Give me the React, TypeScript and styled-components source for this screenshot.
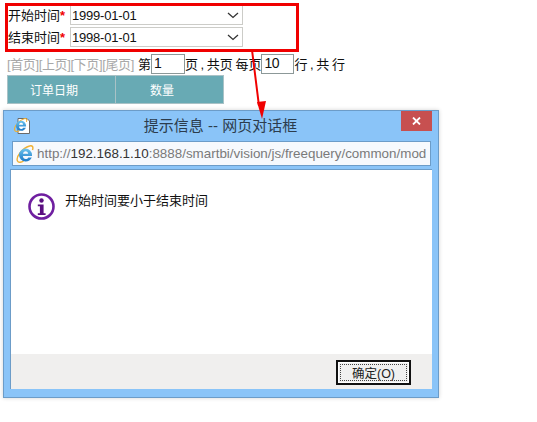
import React from "react";
import styled, { createGlobalStyle } from "styled-components";

const Global = createGlobalStyle`
  html, body { margin: 0; padding: 0; background: #fff; }
  body { font-family: "Liberation Sans", "Noto Sans CJK SC", sans-serif; font-size: 13px; color: #111; }
`;

const Page = styled.div`
  position: relative;
  width: 537px;
  height: 422px;
  overflow: hidden;
  padding: 3px 0 0 3px;
  box-sizing: border-box;
`;

const Form = styled.div`
  position: relative;
  box-sizing: border-box;
  width: 294px;
  height: 49px;
  margin-left: 2px;
  padding: 2px 0 0 3px;
  display: flex;
  flex-direction: column;
  gap: 2px;
  &::after {
    content: "";
    position: absolute;
    inset: 0;
    border: 3px solid #f00000;
  }
`;

const FormRow = styled.div`
  display: flex;
  align-items: center;
  height: 20px;
`;

const Label = styled.span`
  font-size: 13px;
  width: 62px;
  white-space: nowrap;
  position: relative;
  top: -1px;
`;

const Star = styled.span`
  color: #f00000;
  font-weight: bold;
`;

const Select = styled.div`
  box-sizing: border-box;
  width: 173px;
  height: 20px;
  border: 1px solid #ccccc8;
  display: flex;
  align-items: center;
  justify-content: space-between;
  padding: 0 3px 0 1px;
  font-size: 13px;
  letter-spacing: -0.2px;
  background: #fff;
`;

const Pager = styled.div`
  display: flex;
  align-items: center;
  height: 21px;
  margin: 1px 0 0 4px;
  white-space: pre;
  font-size: 13px;
  word-spacing: -1px;
`;

const PagerLinks = styled.span`
  color: #a8a8a8;
  margin-right: 4px;
  letter-spacing: -0.37px;
`;

const PageInput = styled.div<{ $w: number }>`
  box-sizing: border-box;
  width: ${(p) => p.$w}px;
  height: 20px;
  border: 1px solid #8c9898;
  padding-left: 2px;
  line-height: 16px;
  font-size: 14px;
  letter-spacing: -0.5px;
`;

const Table = styled.div`
  box-sizing: border-box;
  display: flex;
  width: 217px;
  height: 29px;
  margin: 1px 0 0 4px;
  background: #68aab4;
  border: 1px solid #a9c2c6;
  color: #fff;
  font-size: 12px;
`;

const HeaderCell = styled.div<{ $w: number }>`
  box-sizing: border-box;
  width: ${(p) => p.$w}px;
  display: flex;
  align-items: center;
  justify-content: center;
  padding-right: 15px;
  & + & { border-left: 1px solid #a9c2c6; }
`;

const Dialog = styled.div`
  box-sizing: border-box;
  width: 436px;
  height: 288px;
  margin-top: 6px;
  background: #8ac4f8;
  border: 1px solid #6c9cc8;
  box-shadow: 0 0 4px rgba(0, 0, 0, 0.18);
  padding: 0 6px 8px 6px;
  display: flex;
  flex-direction: column;
`;

const TitleBar = styled.div`
  height: 30px;
  display: flex;
  align-items: flex-start;
  flex-shrink: 0;
`;

const TitleIcon = styled.div`
  width: 18px;
  height: 18px;
  margin: 6px 0 0 2px;
`;

const Title = styled.div`
  flex: 1;
  text-align: center;
  font-size: 15px;
  color: #2c3c4c;
  line-height: 18px;
  padding-top: 6px;
  margin-left: 10px;
`;

const Close = styled.div`
  width: 31px;
  height: 20px;
  background: #c75050;
  display: flex;
  align-items: center;
  justify-content: center;
`;

const Address = styled.div`
  box-sizing: border-box;
  height: 25px;
  margin: 0 1px 0 2px;
  background: #f6f9fd;
  border: 1px solid #6c9cc8;
  display: flex;
  align-items: center;
  padding-left: 3px;
  gap: 3px;
  font-size: 13.4px;
  color: #7a7a7a;
  white-space: nowrap;
  overflow: hidden;
  flex-shrink: 0;
`;

const Host = styled.span`
  color: #333;
`;

const Body = styled.div`
  flex: 1;
  margin: 3px 0 0 0;
  background: #fff;
  display: flex;
  flex-direction: column;
  border: 1px solid #6c9cc8;
  border-width: 1px 0 0 1px;
`;

const Message = styled.div`
  flex: 1;
  display: flex;
  align-items: flex-start;
  padding: 23px 0 0 17px;
  gap: 10px;
`;

const MessageText = styled.div`
  font-size: 13px;
  line-height: 18px;
  color: #111;
  margin-top: -1px;
`;

const Footer = styled.div`
  height: 35px;
  background: #f0efee;
  display: flex;
  justify-content: flex-end;
  align-items: flex-start;
  padding: 6px 21px 0 0;
  box-sizing: border-box;
`;

const OkButton = styled.div`
  box-sizing: border-box;
  width: 75px;
  height: 25px;
  border: 2px solid #111;
  background: #f0f0f0;
  box-shadow: inset 0 0 0 1px #fff;
  display: flex;
  align-items: center;
  justify-content: center;
  font-size: 12.5px;
  color: #222;
  outline: 1px dotted #444;
  outline-offset: -5px;
`;

const Arrow = styled.svg`
  position: absolute;
  left: 245px;
  top: 48px;
`;

const IeGlyph = ({ x, y, s, id }: { x: number; y: number; s: number; id: string }) => (
  <g transform={`translate(${x} ${y}) scale(${s})`}>
    <defs>
      <linearGradient id={id} x1="0" y1="0" x2="0" y2="1">
        <stop offset="0" stopColor="#6cc4ee" />
        <stop offset="1" stopColor="#1b78c6" />
      </linearGradient>
    </defs>
    <path
      d="M1 16C-1 12 6 3 13 1c3-1 4 1 3 4M1 16c1 2 4 1.5 6 0"
      fill="none"
      stroke="#f0b032"
      strokeWidth="1.4"
    />
    <path
      d="M9 3.5a6.5 6.5 0 0 1 6.5 6.5v1H6.4c.2 2 1.2 3 2.8 3 1.2 0 2-.5 2.6-1.5h3.5C14 15 12 16.5 9 16.5A6.5 6.5 0 0 1 9 3.5zM6.5 8.8h5.2C11.5 7 10.500 6.200 9.100 6.200 7.700 6.200 6.800 7 6.500 8.800z"
      fill={`url(#${id})`}
      fillRule="evenodd"
    />
  </g>
);

const Chevron = () => (
  <svg width="12" height="7" viewBox="0 0 12 7">
    <path d="M1 1l5 4.500L11 1" fill="none" stroke="#333" strokeWidth="1.300" />
  </svg>
);

export default function App() {
  return (
    <Page>
      <Global />
      <Form>
        <FormRow>
          <Label>开始时间<Star>*</Star></Label>
          <Select>
            1999-01-01
            <Chevron />
          </Select>
        </FormRow>
        <FormRow>
          <Label>结束时间<Star>*</Star></Label>
          <Select>
            1998-01-01
            <Chevron />
          </Select>
        </FormRow>
      </Form>
      <Pager>
        <PagerLinks>[首页][上页][下页][尾页]</PagerLinks>
        第<PageInput $w={34}>1</PageInput>页 , 共页 每页<PageInput $w={33}>10</PageInput>行 , 共 行
      </Pager>
      <Table>
        <HeaderCell $w={107}>订单日期</HeaderCell>
        <HeaderCell $w={108}>数量</HeaderCell>
      </Table>
      <Dialog>
        <TitleBar>
          <TitleIcon>
            <svg width="20" height="18" viewBox="0 0 20 18">
              <path d="M6 1.500h9l2.500 2.500v12.500H6z" fill="#fff" stroke="#6a6a6a" strokeWidth="1" />
              <IeGlyph x={2} y={1} s={0.78} id="ieSmall" />
            </svg>
          </TitleIcon>
          <Title>提示信息 -- 网页对话框</Title>
          <Close>
            <svg width="9" height="8" viewBox="0 0 9 8">
              <path d="M1 .5l7 7M8 .5l-7 7" stroke="#fff" strokeWidth="1.800" />
            </svg>
          </Close>
        </TitleBar>
        <Address>
          <svg width="18" height="18" viewBox="0 0 18 18">
            <IeGlyph x={0.5} y={0} s={1} id="ieLarge" />
          </svg>
          <span>http://<Host>192.168.1.10</Host>:8888/smartbi/vision/js/freequery/common/mod</span>
        </Address>
        <Body>
          <Message>
            <svg width="27" height="27" viewBox="0 0 27 27">
              <circle cx="13.500" cy="13.500" r="12" fill="#fff" stroke="#6f1fa0" strokeWidth="2.600" />
              <circle cx="13.500" cy="7.500" r="2.200" fill="#5a0f80" />
              <path d="M9.800 11.500h5.800v8.800h2v1.700H9.800v-1.700h2.100v-7.100H9.800z" fill="#5a0f80" />
            </svg>
            <MessageText>开始时间要小于结束时间</MessageText>
          </Message>
          <Footer>
            <OkButton>确定(O)</OkButton>
          </Footer>
        </Body>
      </Dialog>
      <Arrow width="30" height="80" viewBox="0 0 30 80">
        <path d="M7 2L14 58" stroke="#f00000" strokeWidth="2" fill="none" />
        <path d="M12 54l9-1L17 71z" fill="#f00000" />
      </Arrow>
    </Page>
  );
}
